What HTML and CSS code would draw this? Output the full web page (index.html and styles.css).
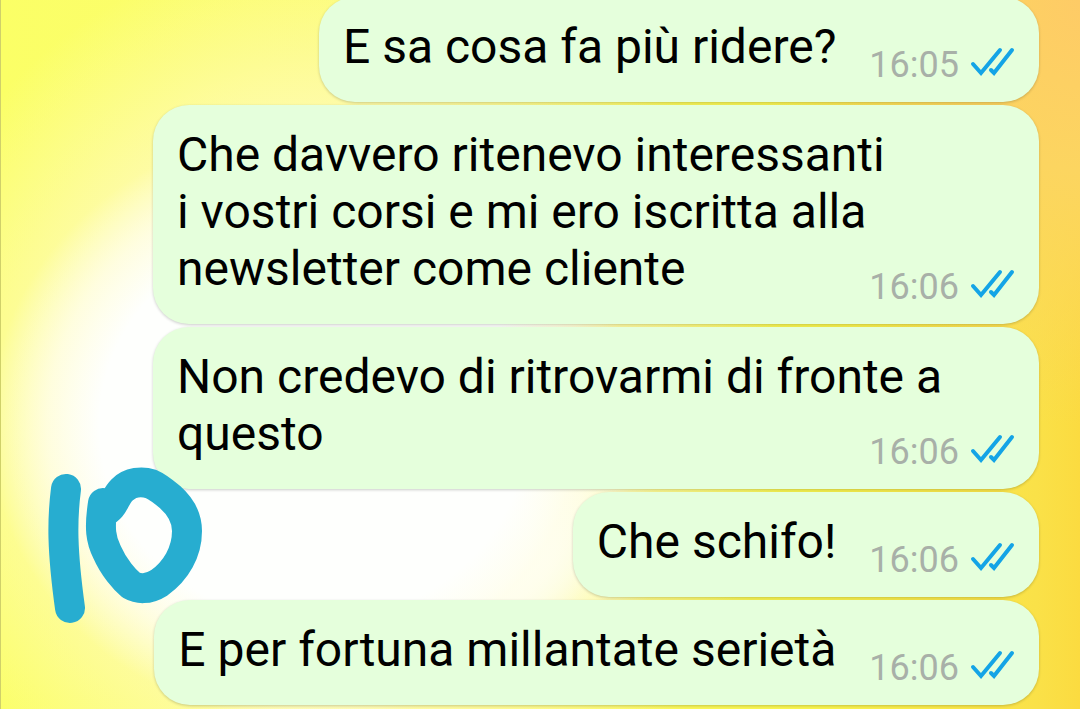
FILE: index.html
```html
<!DOCTYPE html>
<html lang="it">
<head>
    <meta charset="UTF-8">
    <meta name="viewport" content="width=device-width, initial-scale=1.0">
    <title>Chat</title>
    <link rel="stylesheet" href="styles.css">
</head>
<body>
    <svg class="icon-defs" aria-hidden="true">
        <symbol id="read" viewBox="0 0 46 32">
            <path d="M4 17 L12 26 L31 3 M22 23 L25 26 L43 3"/>
        </symbol>
    </svg>

    <main class="chat">
        <div class="bubble">
            <p class="text">E sa cosa fa più ridere?</p>
            <div class="meta"><time>16:05</time><svg class="ticks"><use href="#read"/></svg></div>
        </div>
        <div class="bubble long">
            <p class="text">Che davvero ritenevo interessanti<br>i vostri corsi e mi ero iscritta alla newsletter come cliente</p>
            <div class="meta"><time>16:06</time><svg class="ticks"><use href="#read"/></svg></div>
        </div>
        <div class="bubble long">
            <p class="text">Non credevo di ritrovarmi di fronte a questo</p>
            <div class="meta"><time>16:06</time><svg class="ticks"><use href="#read"/></svg></div>
        </div>
        <div class="bubble">
            <p class="text">Che schifo!</p>
            <div class="meta"><time>16:06</time><svg class="ticks"><use href="#read"/></svg></div>
        </div>
        <div class="bubble">
            <p class="text">E per fortuna millantate serietà</p>
            <div class="meta"><time>16:06</time><svg class="ticks"><use href="#read"/></svg></div>
        </div>

        <!-- hand-drawn marker over the chat -->
        <svg class="marker" viewBox="0 0 160 160" aria-hidden="true">
            <path d="M20 24 C16 55 16 85 24 143"/>
            <path d="M57 38 C53 64 55 75 61 87 C68 103 79 115 85 120 C92 124 102 125 113 118 C130 106 141 87 141 66 C141 52 133 40 124 32 C118 27 112 22 105 19 C96 16 84 17 76 25 C68 33 68 43 58 47"/>
        </svg>
    </main>
</body>
</html>
```

FILE: styles.css
```css
* {
    box-sizing: border-box;
}

body {
    margin: 0;
    min-height: 100vh;
    overflow: hidden;
    font-family: Roboto, Arial, sans-serif;
    color: #000;
    border-left: 1px solid #cfd06a;
    background:
        radial-gradient(ellipse 30% 42% at 29% 60%, #fefffd 0%, #fefffd 66%, rgba(255, 254, 235, 0.8) 82%, rgba(255, 252, 200, 0) 100%),
        radial-gradient(ellipse 26% 22% at 36% 76%, #fefffd 0%, #fefffd 50%, rgba(255, 252, 200, 0) 100%),
        radial-gradient(ellipse 42% 66% at 31% 58%, rgba(255, 251, 190, 0.9) 55%, rgba(255, 250, 150, 0) 100%),
        radial-gradient(ellipse 30% 60% at 100% 0%, #fecb66 0%, #fcd560 40%, rgba(252, 220, 80, 0) 100%),
        linear-gradient(to right, rgba(250, 225, 60, 0) 75%, #fae148 96%, #fbdb40 100%),
        linear-gradient(to right, #fbff66 0%, #fcfc70 35%, #f8f550 75%);
}

.icon-defs {
    display: none;
}

.chat {
    position: relative;
    display: flex;
    flex-direction: column;
    align-items: flex-end;
    gap: 3px;
    margin-top: -3px;
    padding-right: 41px;
}

.bubble {
    display: grid;
    grid-template-columns: auto auto;
    column-gap: 33px;
    padding: 21px 24px 18px 24px;
    border-radius: 36px;
    background-color: #e5ffdc;
    box-shadow: 0 1px 3px rgba(0, 0, 0, 0.2);
}

.text {
    margin: 0 0 9px;
    font-size: 48px;
    line-height: 57px;
}

.meta {
    display: flex;
    align-items: flex-start;
    align-self: end;
    justify-self: end;
    gap: 10px;
    height: 37px;
    font-size: 36px;
    line-height: 36px;
    color: #a8b0a8;
}

/* the time shares the last line with the text */
.long {
    grid-template-columns: 1fr;
    width: calc(100% - 152px);
}

.long .text,
.long .meta {
    grid-area: 1 / 1;
}

.ticks {
    width: 46px;
    height: 32px;
    fill: none;
    stroke: #14a4e6;
    stroke-width: 4;
    stroke-linecap: round;
}

.marker {
    position: absolute;
    left: 45px;
    top: 468px;
    width: 160px;
    height: 160px;
    fill: none;
    stroke: #27add0;
    stroke-width: 30;
    stroke-linecap: round;
    stroke-linejoin: round;
}
```
